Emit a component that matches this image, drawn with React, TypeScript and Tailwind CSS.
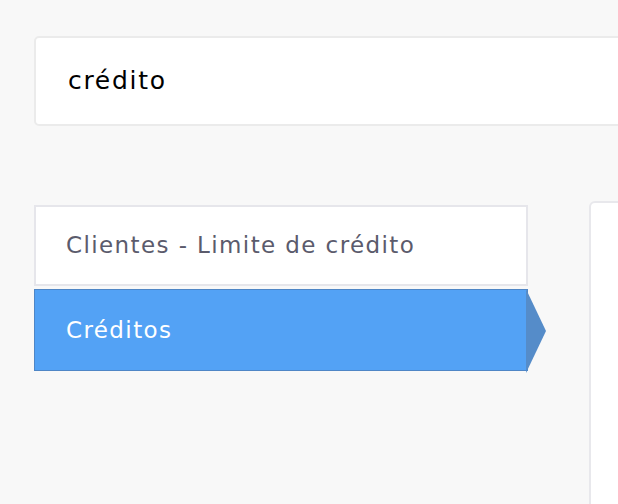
const items = ['Clientes - Limite de crédito', 'Créditos']

export default function App() {
  const active = 1
  return (
    <div className="h-[504px] w-[618px] overflow-hidden bg-[#f8f8f8] font-['DejaVu_Sans',sans-serif]">
      <div className="pl-[34px] pt-[36px]">
        <div className="flex h-[90px] w-[640px] items-center rounded-[5px] border-2 border-[#ebebeb] bg-white pl-[32px] text-[25px] tracking-[1.7px] text-black">
          crédito
        </div>
      </div>
      <div className="mt-[75px] flex items-start pl-[34px]">
        <div className="mt-[4px] flex w-[494px] shrink-0 flex-col gap-[3px]">
          {items.map((label, i) =>
            i === active ? (
              <div key={label} className="relative">
                <div className="flex h-[82px] items-center border border-[#4f86c6] bg-[#53a2f5] pl-[31px] text-[23px] tracking-[1.4px] text-white">
                  {label}
                </div>
                <svg className="absolute left-[492px] top-0" width="21" height="84" viewBox="0 0 21 84">
                  <polygon points="0,0 20,42 0,84" fill="#558cc9" />
                </svg>
              </div>
            ) : (
              <div key={label} className="flex h-[81px] items-center border-2 border-[#e6e6eb] bg-white pl-[30px] text-[23px] tracking-[1.4px] text-[#5b5b6c]">
                {label}
              </div>
            )
          )}
        </div>
        <div className="ml-[61px] h-[320px] w-[60px] shrink-0 rounded-[6px] border-2 border-[#e8e8ec] bg-white" />
      </div>
    </div>
  )
}
